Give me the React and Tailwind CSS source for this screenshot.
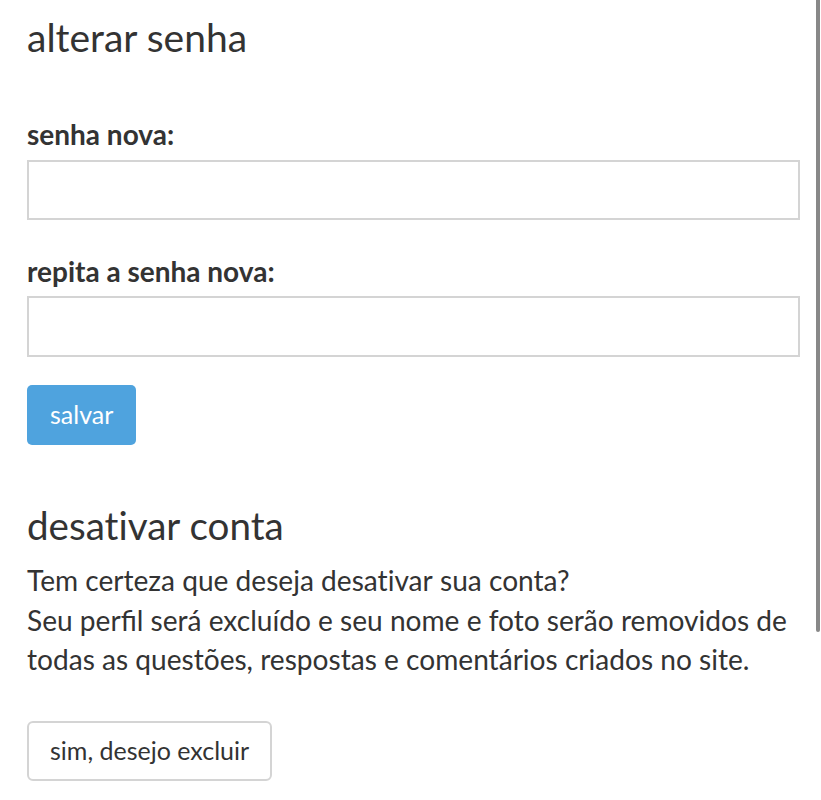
export default function App() {
  return (
    <div className="relative min-h-screen bg-white text-[#333] [font-family:Lato,sans-serif]">
      <div className="px-[27px] pt-[18px] pb-[19px] pr-[21px]">
        <h1 className="text-[39px] leading-[38px] font-normal">alterar senha</h1>

        <form className="flex flex-col items-start">
          <label className="mt-[63px] mb-[11px] text-[28px] leading-[30px] font-bold">senha nova:</label>
          <input type="password" className="w-full h-[60px] border-2 border-[#d4d4d4] bg-white outline-none" />

          <label className="mt-[36px] mb-[10px] text-[28px] leading-[30px] font-bold">repita a senha nova:</label>
          <input type="password" className="w-full h-[61px] border-2 border-[#d4d4d4] bg-white outline-none" />

          <button type="button" className="mt-[28px] h-[60px] px-[23px] rounded-[5px] bg-[#4fa3de] text-white text-[25px]">
            salvar
          </button>
        </form>

        <h2 className="mt-[61px] text-[38.6px] leading-[38px] font-normal [font-variant-ligatures:no-common-ligatures]">desativar conta</h2>
        <p className="mt-[17px] text-[28.1px] leading-[39.5px]">
          Tem certeza que deseja <span className="[font-variant-ligatures:no-common-ligatures]">desativar</span> sua conta?
          <br />
          Seu perfil será excluído e seu nome e foto serão removidos de todas as questões, respostas e comentários criados no site.
        </p>
        <button type="button" className="mt-[41px] h-[60px] px-[21px] rounded-[6px] border-2 border-[#d4d4d4] bg-white text-[25px]">
          sim, desejo excluir
        </button>
      </div>

      <div className="absolute right-[1px] top-0 w-[4px] h-[632px] rounded-b-full bg-[#888]" />
    </div>
  );
}
